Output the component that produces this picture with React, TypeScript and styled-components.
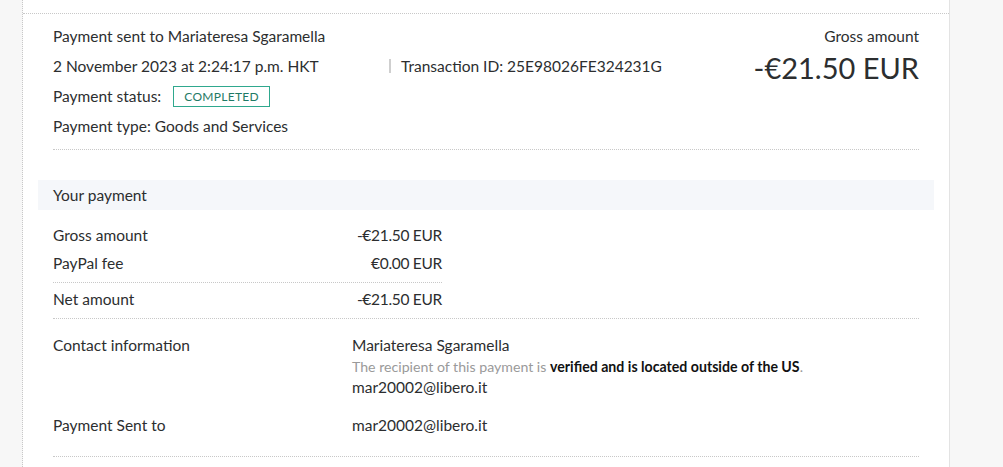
import styled, { createGlobalStyle } from 'styled-components'

const GlobalStyle = createGlobalStyle`
    body {
        margin: 0;
        background: #f7f7f7;
        font-family: Lato, "Open Sans", sans-serif;
        color: #2c2e2f;
    }
`

interface AmountRow {
    label: string
    value: string
    divider?: boolean
}

const amounts: AmountRow[] = [
    { label: 'Gross amount', value: '-€21.50 EUR' },
    { label: 'PayPal fee', value: '€0.00 EUR', divider: true },
    { label: 'Net amount', value: '-€21.50 EUR' },
]

export default function App() {
    return (
        <Page>
            <GlobalStyle />
            <Gutter />
            <Main>
                <Card>
                    <Summary>
                        <SummaryInfo>
                            <Line>Payment sent to Mariateresa Sgaramella</Line>
                            <Line>
                                <DateText>2 November 2023 at 2:24:17 p.m. HKT</DateText>
                                <Separator />
                                <span>Transaction ID: 25E98026FE324231G</span>
                            </Line>
                            <Line>
                                Payment status:
                                <Badge>COMPLETED</Badge>
                            </Line>
                            <Line>Payment type: Goods and Services</Line>
                        </SummaryInfo>
                        <GrossBlock>
                            <GrossLabel>Gross amount</GrossLabel>
                            <GrossValue>-€21.50 EUR</GrossValue>
                        </GrossBlock>
                    </Summary>

                    <SectionHeader>Your payment</SectionHeader>

                    <AmountTable>
                        {amounts.map(a => (
                            <AmountLine key={a.label} divider={a.divider}>
                                <span>{a.label}</span>
                                <Value>{a.value}</Value>
                            </AmountLine>
                        ))}
                    </AmountTable>

                    <DetailRow>
                        <DetailLabel>Contact information</DetailLabel>
                        <DetailValue>
                            <div>Mariateresa Sgaramella</div>
                            <Note>
                                The recipient of this payment is <strong>verified and is located outside of the US</strong>.
                            </Note>
                            <div>mar20002@libero.it</div>
                        </DetailValue>
                    </DetailRow>
                    <DetailRow last>
                        <DetailLabel>Payment Sent to</DetailLabel>
                        <DetailValue>mar20002@libero.it</DetailValue>
                    </DetailRow>
                </Card>
            </Main>
        </Page>
    )
}

const Page = styled.div`
    display: flex;
    min-height: 467px;
`

const Gutter = styled.div`
    width: 22px;
    border-right: 1px dotted #c8c8c8;
`

const Main = styled.div`
    width: 926px;
    background: #ffffff;
    border-right: 1px solid #e3e3e3;
    padding-top: 13px;
`

const Card = styled.div`
    border-top: 1px dotted #c8c8c8;
    font-size: 15.5px;
`

const Summary = styled.div`
    display: flex;
    justify-content: space-between;
    margin: 0 30px;
    padding: 12px 0 13px;
    border-bottom: 1px dotted #c8c8c8;
`

const SummaryInfo = styled.div`
    display: flex;
    flex-direction: column;
    gap: 10px;
`

const Line = styled.div`
    display: flex;
    align-items: center;
    height: 20px;
`

const DateText = styled.span`
    width: 336px;
`

const Separator = styled.span`
    width: 2px;
    height: 14px;
    background: #cfcfcf;
    margin-right: 10px;
`

const Badge = styled.span`
    margin-left: 12px;
    border: 1px solid #2fa88e;
    color: #1f7a66;
    font-size: 12px;
    letter-spacing: 0.3px;
    padding: 2px 10px;
    line-height: 15px;
`

const GrossBlock = styled.div`
    display: flex;
    flex-direction: column;
    align-items: flex-end;
`

const GrossLabel = styled.div`
    height: 20px;
    line-height: 20px;
`

const GrossValue = styled.div`
    font-size: 29px;
    line-height: 36px;
    margin-top: 4px;
`

const SectionHeader = styled.div`
    margin: 30px 15px 0;
    background: #f5f7fa;
    padding: 0 15px;
    height: 30px;
    line-height: 30px;
`

const AmountTable = styled.div`
    margin: 11px 30px 0;
    border-bottom: 1px dotted #c8c8c8;
`

const AmountLine = styled.div<{ divider?: boolean }>`
    display: flex;
    justify-content: space-between;
    width: 389px;
    line-height: 28px;
    padding-bottom: ${({ divider }) => (divider ? '5px' : '0')};
    border-bottom: ${({ divider }) => (divider ? '1px dotted #c8c8c8' : 'none')};
    &:last-child {
        padding: 2px 0 5px;
    }
`

const Value = styled.span`
    letter-spacing: -0.3px;
`

const DetailRow = styled.div<{ last?: boolean }>`
    display: flex;
    margin: 0 30px;
    padding-top: ${({ last }) => (last ? '5px' : '16px')};
    padding-bottom: ${({ last }) => (last ? '20px' : '12px')};
    border-bottom: ${({ last }) => (last ? '1px dotted #c8c8c8' : 'none')};
    line-height: 21px;
`

const DetailLabel = styled.div`
    width: 299px;
`

const DetailValue = styled.div`
    display: flex;
    flex-direction: column;
`

const Note = styled.div`
    font-size: 14.15px;
    color: #9a9a9a;
    strong {
        color: #111;
        font-weight: 700;
    }
`
